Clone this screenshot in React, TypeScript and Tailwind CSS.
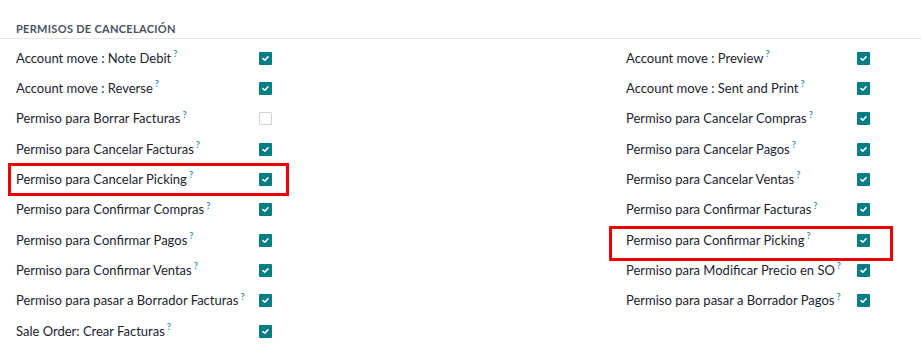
import React from "react";

type Item = { label: string; checked: boolean };

const left: Item[] = [
  { label: "Account move : Note Debit", checked: true },
  { label: "Account move : Reverse", checked: true },
  { label: "Permiso para Borrar Facturas", checked: false },
  { label: "Permiso para Cancelar Facturas", checked: true },
  { label: "Permiso para Cancelar Picking", checked: true },
  { label: "Permiso para Confirmar Compras", checked: true },
  { label: "Permiso para Confirmar Pagos", checked: true },
  { label: "Permiso para Confirmar Ventas", checked: true },
  { label: "Permiso para pasar a Borrador Facturas", checked: true },
  { label: "Sale Order: Crear Facturas", checked: true },
];

const right: Item[] = [
  { label: "Account move : Preview", checked: true },
  { label: "Account move : Sent and Print", checked: true },
  { label: "Permiso para Cancelar Compras", checked: true },
  { label: "Permiso para Cancelar Pagos", checked: true },
  { label: "Permiso para Cancelar Ventas", checked: true },
  { label: "Permiso para Confirmar Facturas", checked: true },
  { label: "Permiso para Confirmar Picking", checked: true },
  { label: "Permiso para Modificar Precio en SO", checked: true },
  { label: "Permiso para pasar a Borrador Pagos", checked: true },
];

function Check({ checked }: { checked: boolean }) {
  if (!checked) {
    return <div className="w-[13px] h-[13px] border border-[#cfd4da] rounded-[1px] bg-white" />;
  }
  return (
    <div className="w-[13px] h-[13px] rounded-[1px] bg-[#017e84] flex items-center justify-center">
      <svg width="9" height="9" viewBox="0 0 9 9">
        <path d="M2 4.6 L3.8 6.2 L7 2.9" fill="none" stroke="white" strokeWidth="1.6" strokeLinecap="round" strokeLinejoin="round" />
      </svg>
    </div>
  );
}

function Row({ item, labelW }: { item: Item; labelW: string }) {
  return (
    <div className="h-[30.33px] flex items-center">
      <div className={`${labelW} flex items-center text-[13px] text-[#1c2330] leading-none`}>
        <span>{item.label}</span>
        <span className="ml-[2px] -mt-[9px] text-[9px] font-bold text-[#2f93b0]">?</span>
      </div>
      <Check checked={item.checked} />
    </div>
  );
}

export default function App() {
  return (
    <div
      className="w-[921px] h-[359px] bg-white relative overflow-hidden"
      style={{ fontFamily: "Lato, 'Open Sans', sans-serif" }}
    >
      <div className="pt-[24px] pb-[5px] pl-4 border-b border-[#e6e8eb]">
        <div className="text-[11px] font-bold tracking-[0.3px] text-[#4a5261] leading-[9px] uppercase">
          Permisos de Cancelación
        </div>
      </div>
      <div className="flex mt-[4px]">
        <div className="w-[610px] pl-4">
          {left.map((it) => (
            <Row key={it.label} item={it} labelW="w-[243px]" />
          ))}
        </div>
        <div className="pl-4">
          {right.map((it) => (
            <Row key={it.label} item={it} labelW="w-[231px]" />
          ))}
        </div>
      </div>
      <div className="absolute left-[8px] top-[163px] w-[281px] h-[33px] border-[3px] border-[#f00000]" />
      <div className="absolute left-[609px] top-[226px] w-[284px] h-[35px] border-[3px] border-[#f00000]" />
    </div>
  );
}
